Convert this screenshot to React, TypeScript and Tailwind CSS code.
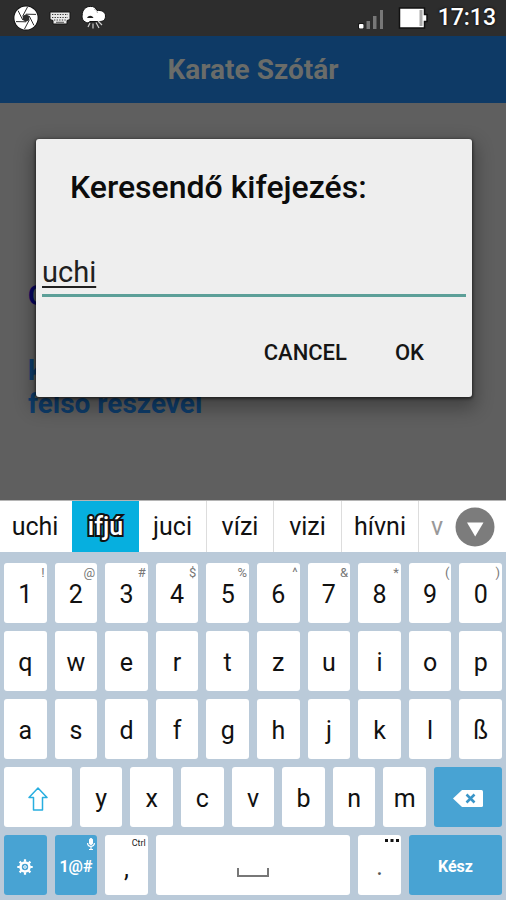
import { useState, type ReactNode } from "react";

type KeyProps = {
  label: string;
  span?: string;
  tone?: "light" | "blue";
  hint?: ReactNode;
  children?: ReactNode;
};

function Key({ label, span = "col-span-2", tone = "light", hint, children }: KeyProps) {
  const colours = tone === "blue" ? "bg-[#48a3d3] text-white" : "bg-white text-[#111111]";
  return (
    <button
      type="button"
      aria-label={label}
      className={`relative mx-1 flex h-[60px] items-center justify-center rounded-[3px] pt-[3px] text-[25px] leading-[30px] ${colours} ${span}`}
    >
      {children ?? label}
      {hint}
    </button>
  );
}

function Hint({ children }: { children: ReactNode }) {
  return (
    <span className="absolute top-0.5 right-0.5 text-[13px] leading-4 text-[#777777]">{children}</span>
  );
}

const digits = [
  ["1", "!"],
  ["2", "@"],
  ["3", "#"],
  ["4", "$"],
  ["5", "%"],
  ["6", "^"],
  ["7", "&"],
  ["8", "*"],
  ["9", "("],
  ["0", ")"],
];

function StatusBar() {
  return (
    <div className="flex h-9 items-center bg-[#2d2d2d] pr-[10px] pl-[13px] text-white">
      <svg className="h-[26px] w-[26px]" viewBox="0 0 26 26" aria-hidden="true">
        <circle cx="13" cy="13" r="12.5" fill="#111" />
        <circle cx="13" cy="13" r="11.6" fill="#fff" />
        <path d="M13 9.200l3.300 1.900v3.800L13 16.800l-3.300-1.900v-3.800z" fill="#2d2d2d" />
        <path
          d="M9.700 11.100L14.500 2M13 9.200l10 .2M16.300 11.100l4.600 9.200M16.300 14.900L11.500 24M13 16.800l-10-.2M9.700 14.900L5.100 5.700"
          stroke="#2d2d2d"
          strokeWidth="1"
          fill="none"
        />
      </svg>
      <svg className="ml-[10px] h-[14px] w-[22px]" viewBox="0 0 22 14" aria-hidden="true">
        <path d="M1 1h20v7.500l-3 1v3.500H4V9.500l-3-1z" fill="#e8e8e8" stroke="#151515" strokeWidth="1" />
        <path d="M3 3.500h16M3 6.500h16M5 9h12" stroke="#333" strokeWidth="1" strokeDasharray="1.300 1.300" />
        <path d="M7 11.300h8" stroke="#555" strokeWidth="1" />
      </svg>
      <svg className="ml-2.5 h-[26px] w-[26px]" viewBox="0 0 26 26" aria-hidden="true">
        <path
          d="M7 18C2.500 17 .5 14 1.200 10.500 1 5 5 1 9.500 1.500c3-.5 5.500 1.500 6.500 4 4-.5 8.500 1 8.500 5.500s-3 5.500-6 5.500H9z"
          fill="#fff"
          stroke="#111"
          strokeWidth="1"
        />
        <path d="M6 13c1.500-3 5-3 6.500 0z" fill="#222" />
        <path d="M13 4c2 .5 3 2 3.500 4" fill="none" stroke="#aaa" strokeWidth="1" />
        <path d="M9 18l-2 4M12 18.500v5M15 17.500l3 5.500M17 16l4 4" stroke="#ccc" strokeWidth="1.200" />
      </svg>
      <svg className="ml-auto h-6 w-[28px]" viewBox="0 0 28 24" aria-hidden="true">
        <rect x="2" y="17" width="6" height="6" rx="1" fill="#151515" />
        <rect x="3" y="18" width="4.500" height="4.500" rx="1" fill="#fff" />
        <path d="M10.500 15h3.500v8h-3.500zM17 10h3.500v13h-3.500zM24 4h3v19h-3z" fill="#777" />
      </svg>
      <svg className="ml-3.5 h-[22px] w-[30px]" viewBox="0 0 30 22" aria-hidden="true">
        <path
          d="M1.500 1h25v6.500h2.500v7h-2.500V21h-25z"
          fill="#fff"
          stroke="#111"
          strokeWidth="1.500"
        />
        <path d="M21.500 3h3v16h-3z" fill="#aaa" />
      </svg>
      <time className="ml-2.5 text-[23px] leading-7 font-medium [text-shadow:0_0_3px_#000000]">17:13</time>
    </div>
  );
}

function SearchDialog() {
  const [term, setTerm] = useState("uchi");
  return (
    <div className="absolute inset-0 flex items-center pr-[34px] pl-9">
      <form
        role="dialog"
        aria-labelledby="dialog-title"
        onSubmit={(event) => event.preventDefault()}
        className="w-full rounded-[3px] bg-[#eeeeee] px-1.5 pt-7 pb-4 shadow-[0_8px_18px_4px_rgba(0,0,0,0.3),0_1px_3px_1px_rgba(0,0,0,0.5)]"
      >
        <label
          id="dialog-title"
          htmlFor="term"
          className="block pl-7 text-[32px] leading-10 font-medium text-[#0c0c0c]"
        >
          Keresendő kifejezés:
        </label>
        <input
          id="term"
          type="text"
          value={term}
          onChange={(event) => setTerm(event.target.value)}
          className="mt-[30px] block h-[60px] w-full border-b-[3px] border-[#5c9f98] pt-3 text-[29px] leading-9 font-normal text-[#202020] underline decoration-2 underline-offset-4 outline-none"
        />
        <div className="mt-7 flex h-14 items-center justify-end gap-6 pr-[30px] text-[22px] leading-7 font-medium text-[#151515]">
          <button type="button" className="px-3">
            CANCEL
          </button>
          <button type="submit" className="px-3">
            OK
          </button>
        </div>
      </form>
    </div>
  );
}

function Suggestions() {
  return (
    <div className="flex h-[52px] overflow-hidden border-t border-[#b5b5b5] bg-white pl-0.5 text-[25px] leading-8 text-[#111111]">
      <button type="button" className="w-[70px] shrink-0 pr-1">
        uchi
      </button>
      <button
        type="button"
        className="w-[67px] shrink-0 bg-[#06afdf] font-medium text-white [paint-order:stroke_fill] [-webkit-text-stroke:4px_#111111]"
      >
        ifjú
      </button>
      <button type="button" className="w-[68px] shrink-0 border-r border-[#dddddd]">
        juci
      </button>
      <button type="button" className="w-[67px] shrink-0 border-r border-[#dddddd]">
        vízi
      </button>
      <button type="button" className="w-[68px] shrink-0 border-r border-[#dddddd]">
        vizi
      </button>
      <button type="button" className="w-[77px] shrink-0 border-r border-[#dddddd]">
        hívni
      </button>
      <button type="button" className="min-w-0 flex-1 text-[#999999]">
        v
      </button>
      <button type="button" aria-label="More suggestions" className="mr-[11px] flex shrink-0 items-center">
        <svg className="h-10 w-10" viewBox="0 0 40 40">
          <circle cx="20" cy="20" r="19.500" fill="#7c7c7c" />
          <path d="M12 15.500h16.500L20.200 29.500z" fill="#fff" />
        </svg>
      </button>
    </div>
  );
}

function Keyboard() {
  return (
    <div className="grid grid-cols-20 gap-y-2 bg-[#bacad9] pt-[11px] pb-[5px]">
      {digits.map(([digit, symbol]) => (
        <Key key={digit} label={digit} hint={<Hint>{symbol}</Hint>} />
      ))}
      {[..."qwertzuiop"].map((letter) => (
        <Key key={letter} label={letter} />
      ))}
      {[..."asdfghjklß"].map((letter) => (
        <Key key={letter} label={letter} />
      ))}
      <Key label="Shift" span="col-span-3">
        <svg className="h-6 w-5" viewBox="0 0 20 24" fill="none" stroke="#28aee0" strokeWidth="1.500">
          <path d="M10 1l9 9.500h-4.500V23h-9V10.500H1z" strokeLinejoin="round" />
        </svg>
      </Key>
      {[..."yxcvbnm"].map((letter) => (
        <Key key={letter} label={letter} />
      ))}
      <Key label="Backspace" span="col-span-3" tone="blue">
        <svg className="h-[17px] w-[30px]" viewBox="0 0 30 17">
          <path d="M9 0h19.500A1.500 1.500 0 0 1 30 1.500v14a1.500 1.500 0 0 1-1.500 1.500H9L0 8.500z" fill="#fff" />
          <path d="M13.500 4.500l8 8M21.500 4.500l-8 8" stroke="#3a95c8" strokeWidth="2.500" />
        </svg>
      </Key>
      <Key label="Settings" tone="blue">
        <svg className="h-4 w-4" viewBox="0 0 16 16" fill="none" stroke="#fff">
          <circle cx="8" cy="8" r="4.500" strokeWidth="2.600" />
          <circle cx="8" cy="8" r="1.300" strokeWidth="1" />
          <path
            d="M8 .3v2.500M8 13.200v2.500M.3 8h2.500M13.200 8h2.500M2.600 2.600l1.700 1.700M11.700 11.700l1.700 1.700M2.600 13.400l1.700-1.700M11.700 4.300l1.700-1.700"
            strokeWidth="2.200"
          />
        </svg>
      </Key>
      <Key
        label="Symbols"
        tone="blue"
        hint={
          <svg className="absolute top-[3px] right-0.5 h-3 w-2" viewBox="0 0 8 12" fill="none" stroke="#fff">
            <rect x="2.500" y=".5" width="3" height="6" rx="1.500" fill="#fff" />
            <path d="M.6 5c0 4.500 6.800 4.500 6.800 0M4 8.500v3M2 11.500h4" strokeWidth="1.200" />
          </svg>
        }
      >
        <span className="text-base font-bold">1@#</span>
      </Key>
      <Key
        label="Comma"
        hint={
          <span className="absolute top-0.5 right-0.5 text-[9px] leading-3 text-[#222222]">Ctrl</span>
        }
      >
        <span className="pt-1">,</span>
      </Key>
      <Key label="Space" span="col-span-8">
        <svg className="mt-3 h-[9px] w-8" viewBox="0 0 32 9" fill="none" stroke="#777" strokeWidth="2">
          <path d="M1 0v8h30V0" />
        </svg>
      </Key>
      <Key
        label="Period"
        hint={
          <svg className="absolute top-1 right-0.5 h-[3px] w-[14px]" viewBox="0 0 14 3" fill="#111">
            <path d="M0 0h3v3H0zM5.500 0h3v3h-3zM11 0h3v3h-3z" />
          </svg>
        }
      >
        <span className="text-[#555555]">.</span>
      </Key>
      <Key label="Kész" span="col-span-4" tone="blue">
        <span className="text-base font-bold">Kész</span>
      </Key>
    </div>
  );
}

export default function App() {
  return (
    <div className="flex min-h-screen flex-col bg-[#5f5f5f] font-['Roboto',sans-serif]">
      <StatusBar />
      <div className="relative flex flex-1 flex-col">
        <header className="flex h-[67px] items-center justify-center bg-[#0e3a66]">
          <h1 className="text-[28px] leading-9 font-bold text-[#6a6c69]">Karate Szótár</h1>
        </header>
        <main className="flex flex-1 flex-col px-7 pt-[176px] text-[28px] leading-[33px] font-bold">
          <p className="text-[#050560]">C</p>
          <p className="mt-[42px] w-60 text-[#0e3d6b]">
            k
            <br />
            felső részével
          </p>
        </main>
        <SearchDialog />
      </div>
      <footer>
        <Suggestions />
        <Keyboard />
      </footer>
    </div>
  );
}
